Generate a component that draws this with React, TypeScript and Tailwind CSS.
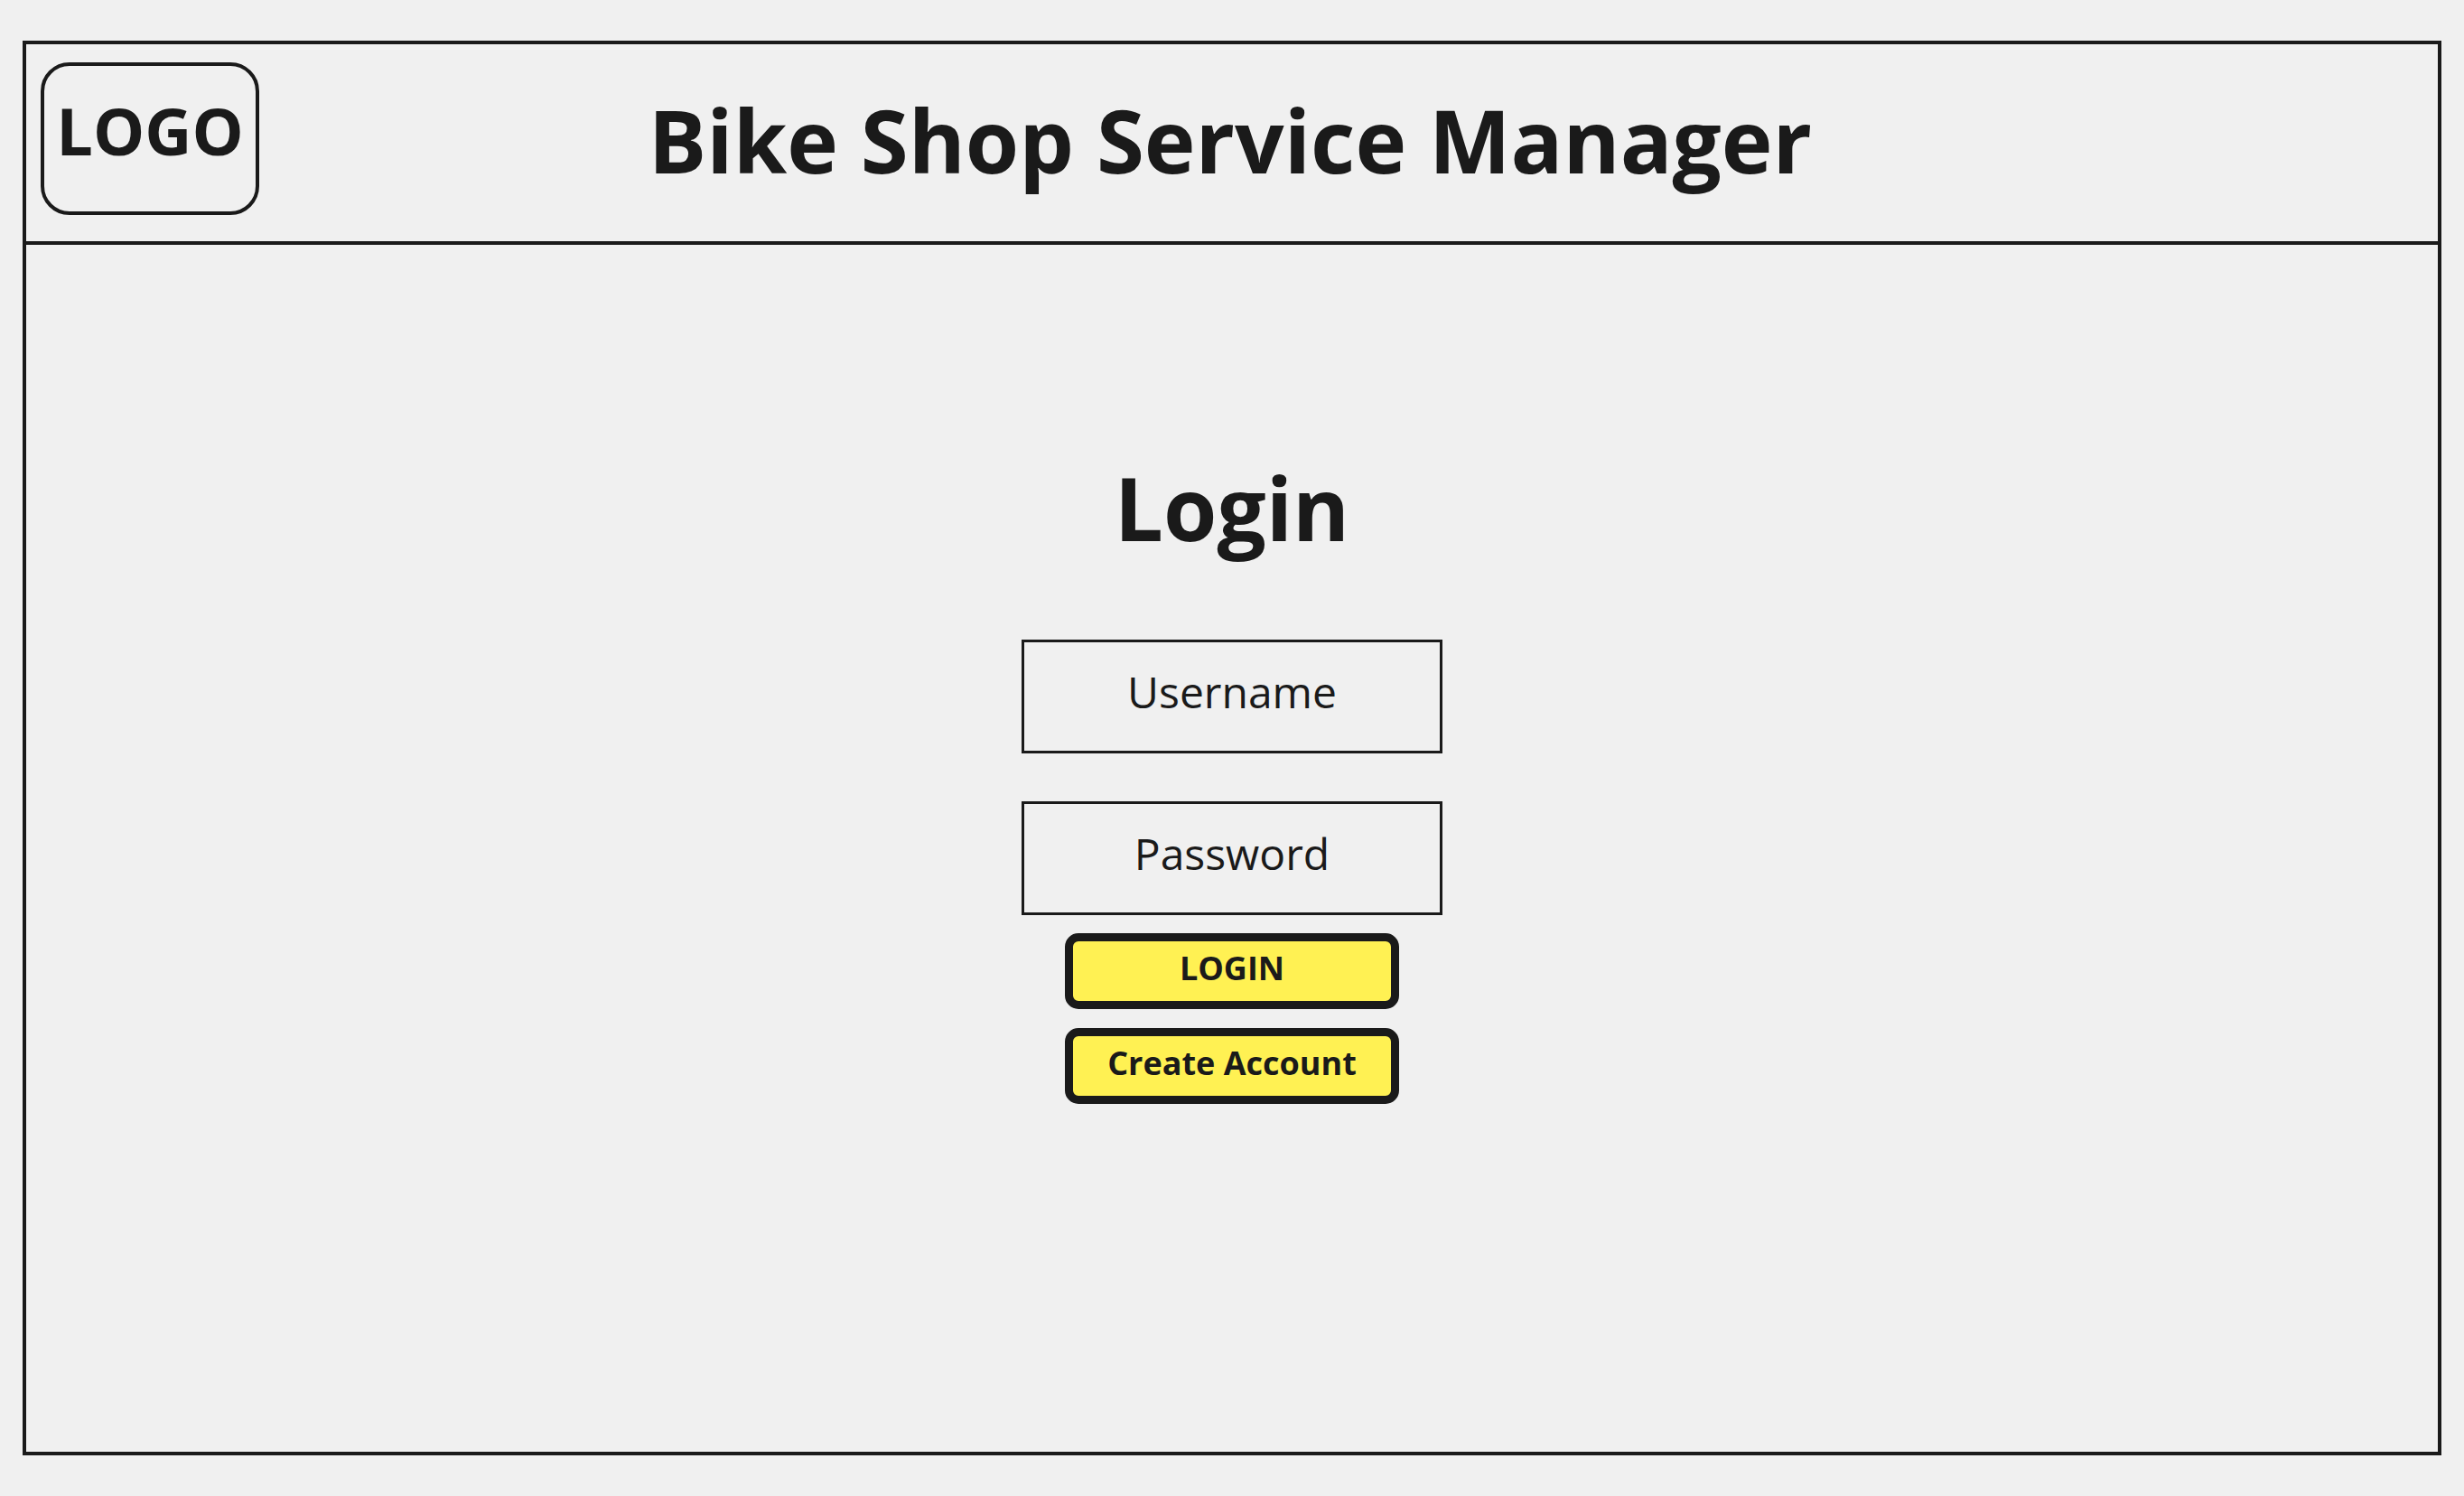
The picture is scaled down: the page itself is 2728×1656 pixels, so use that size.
import React from "react";

export default function App() {
  return (
    <div className="min-h-screen w-full bg-[#f0f0f0] pt-[45px] pl-[25px] font-['Open_Sans',sans-serif] text-[#1a1a1a]">
      <div className="flex h-[1566px] w-[2678px] flex-col border-4 border-[#1a1a1a]">
        <header className="grid h-[222px] shrink-0 grid-cols-[1fr_auto_1fr] border-b-4 border-[#1a1a1a]">
          <div className="self-start">
            <div className="ml-[16px] mt-[20px] h-[169px] w-[242px] rounded-[32px] border-4 border-[#1a1a1a] pt-[35px] text-center text-[72px] font-bold leading-none">
              LOGO
            </div>
          </div>
          <h1 className="mr-[4px] mt-[58px] self-start text-[96px] font-bold leading-none">
            Bike Shop Service Manager
          </h1>
          <div />
        </header>
        <main className="flex flex-1 flex-col items-center pt-[243px]">
          <h2 className="text-[96px] font-bold leading-none">Login</h2>
          <div className="mt-[98px] h-[126px] w-[466px] border-[3px] border-[#1a1a1a] pt-[31px] text-center text-[48px] leading-none">
            Username
          </div>
          <div className="mt-[53px] h-[126px] w-[466px] border-[3px] border-[#1a1a1a] pt-[31px] text-center text-[48px] leading-none">
            Password
          </div>
          <button className="mt-[20px] block h-[84px] w-[370px] rounded-[15px] border-[9px] border-[#1a1a1a] bg-[#fff153] pb-[7px] text-center text-[36px] font-bold leading-none">
            LOGIN
          </button>
          <button className="mt-[21px] block h-[84px] w-[370px] rounded-[15px] border-[9px] border-[#1a1a1a] bg-[#fff153] pb-[7px] text-center text-[36px] font-bold leading-none">
            Create Account
          </button>
        </main>
      </div>
    </div>
  );
}
